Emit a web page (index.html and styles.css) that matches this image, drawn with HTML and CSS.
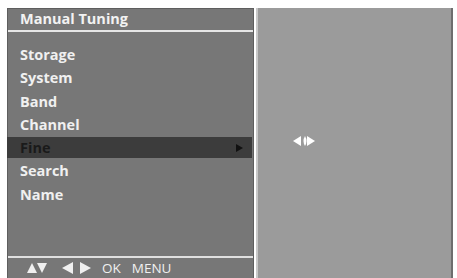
FILE: index.html
```html
<!DOCTYPE html>
<html>
<head>
<meta charset="utf-8">
<link rel="stylesheet" href="styles.css">
</head>
<body>
<div class="screen">
  <div class="menu">
    <div class="title">Manual Tuning</div>
    <ul class="items">
      <li>Storage</li>
      <li>System</li>
      <li>Band</li>
      <li>Channel</li>
      <li class="active">Fine<span class="arrow"></span></li>
      <li>Search</li>
      <li>Name</li>
    </ul>
    <div class="footer">
      <span class="tri up"></span><span class="tri down"></span>
      <span class="tri left gap"></span><span class="tri right"></span>
      <span class="label">OK</span><span class="label">MENU</span>
    </div>
  </div>
  <div class="detail">
    <div class="adjust">
      <svg width="26" height="12" viewBox="0 0 26 12">
        <polygon points="0,6 8,1 8,11" fill="#fff"/>
        <path d="M12 1 Q9 6 12 11 Q15 6 12 1 Z" fill="#fff"/>
        <polygon points="14,1 22,6 14,11" fill="#fff"/>
      </svg>
    </div>
  </div>
</div>
</body>
</html>
```
FILE: styles.css
```css
html, body {
  margin: 0;
  padding: 0;
  background: #fff;
  width: 457px;
  height: 278px;
  overflow: hidden;
}
.screen {
  display: flex;
  padding: 8px 4px 0 7px;
  height: 270px;
  gap: 2px;
  font-family: "Open Sans", "DejaVu Sans", sans-serif;
}
.menu {
  width: 247px;
  background: #777;
  border: 1px solid #5e5e5e;
  border-bottom: none;
  display: flex;
  flex-direction: column;
  box-sizing: border-box;
}
.title {
  height: 21px;
  line-height: 19px;
  color: #f2f2f2;
  font-weight: bold;
  font-size: 14.5px;
  padding-left: 12px;
  border-bottom: 2px solid #e6e6e6;
}
.items {
  list-style: none;
  margin: 0;
  padding: 11px 0 0;
  flex: 1;
}
.items li {
  height: 23.3px;
  line-height: 23px;
  color: #f0f0f0;
  font-weight: bold;
  font-size: 14.5px;
  padding-left: 12px;
  position: relative;
  display: flex;
  align-items: center;
}
.items li.active {
  background: #3c3c3c;
  color: #1a1a1a;
  margin-left: -1px;
  margin-right: 1px;
  padding-left: 13px;
  height: 21px;
  margin-top: 1px;
  margin-bottom: 1px;
}
.arrow {
  margin-left: auto;
  margin-right: 9px;
  width: 0;
  height: 0;
  border-top: 4px solid transparent;
  border-bottom: 4px solid transparent;
  border-left: 7px solid #111;
}
.footer {
  border-top: 2px solid #e0e0e0;
  height: 19px;
  display: flex;
  align-items: center;
  padding-left: 19px;
  color: #f0f0f0;
  font-size: 13.5px;
  margin-bottom: 1px;
}
.tri { width: 0; height: 0; display: inline-block; }
.tri.up {
  border-left: 5.5px solid transparent;
  border-right: 5.5px solid transparent;
  border-bottom: 10px solid #f0f0f0;
}
.tri.down {
  border-left: 5.5px solid transparent;
  border-right: 5.5px solid transparent;
  border-top: 10px solid #f0f0f0;
  margin-left: 0;
}
.tri.left {
  border-top: 6px solid transparent;
  border-bottom: 6px solid transparent;
  border-right: 11px solid #f0f0f0;
}
.tri.left.gap { margin-left: 15px; }
.tri.right {
  border-top: 6px solid transparent;
  border-bottom: 6px solid transparent;
  border-left: 11px solid #f0f0f0;
  margin-left: 7px;
}
.label { margin-left: 11px; }
.detail {
  flex: 1;
  background: #9b9b9b;
  border-left: 2px solid #c8c8c8;
  border-right: 2px solid #6e6e6e;
  position: relative;
}
.adjust {
  position: absolute;
  left: 35px;
  top: 127px;
  display: flex;
}
```
